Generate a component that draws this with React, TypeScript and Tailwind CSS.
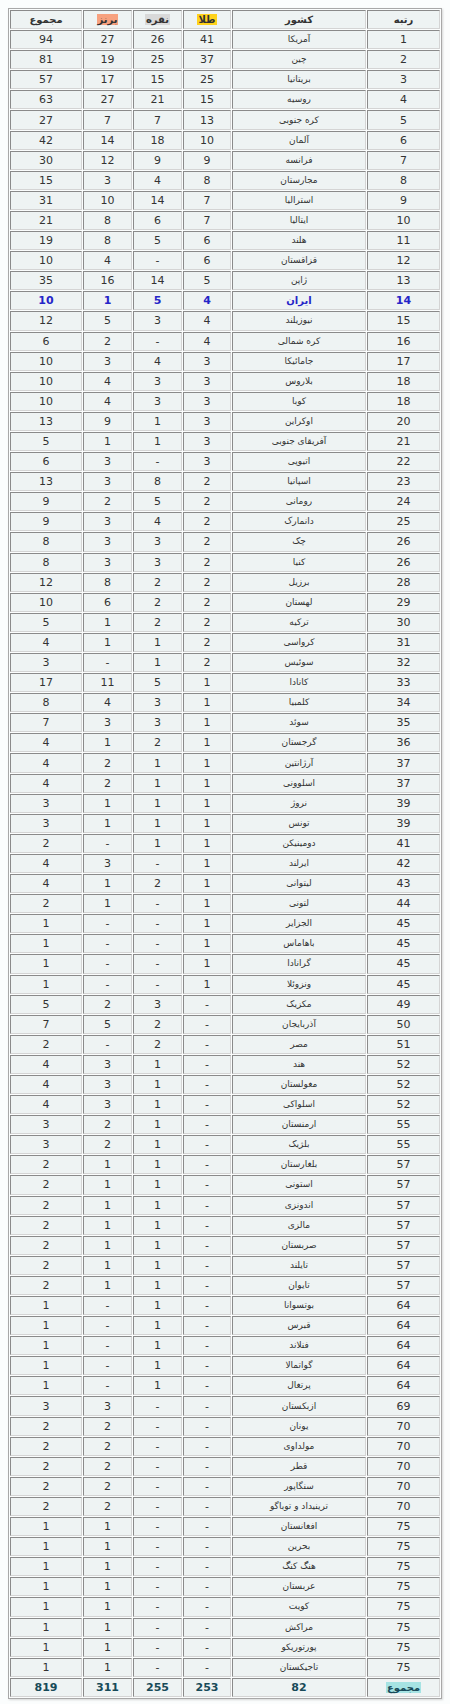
type Row = [string, string, string, string, string, string]

const rows: Row[] = [
  ["1", "آمریکا", "41", "26", "27", "94"],
  ["2", "چین", "37", "25", "19", "81"],
  ["3", "بریتانیا", "25", "15", "17", "57"],
  ["4", "روسیه", "15", "21", "27", "63"],
  ["5", "کره جنوبی", "13", "7", "7", "27"],
  ["6", "آلمان", "10", "18", "14", "42"],
  ["7", "فرانسه", "9", "9", "12", "30"],
  ["8", "مجارستان", "8", "4", "3", "15"],
  ["9", "استرالیا", "7", "14", "10", "31"],
  ["10", "ایتالیا", "7", "6", "8", "21"],
  ["11", "هلند", "6", "5", "8", "19"],
  ["12", "قزاقستان", "6", "-", "4", "10"],
  ["13", "ژاپن", "5", "14", "16", "35"],
  ["14", "ایران", "4", "5", "1", "10"],
  ["15", "نیوزیلند", "4", "3", "5", "12"],
  ["16", "کره شمالی", "4", "-", "2", "6"],
  ["17", "جامائیکا", "3", "4", "3", "10"],
  ["18", "بلاروس", "3", "3", "4", "10"],
  ["18", "کوبا", "3", "3", "4", "10"],
  ["20", "اوکراین", "3", "1", "9", "13"],
  ["21", "آفریقای جنوبی", "3", "1", "1", "5"],
  ["22", "اتیوپی", "3", "-", "3", "6"],
  ["23", "اسپانیا", "2", "8", "3", "13"],
  ["24", "رومانی", "2", "5", "2", "9"],
  ["25", "دانمارک", "2", "4", "3", "9"],
  ["26", "چک", "2", "3", "3", "8"],
  ["26", "کنیا", "2", "3", "3", "8"],
  ["28", "برزیل", "2", "2", "8", "12"],
  ["29", "لهستان", "2", "2", "6", "10"],
  ["30", "ترکیه", "2", "2", "1", "5"],
  ["31", "کرواسی", "2", "1", "1", "4"],
  ["32", "سوئیس", "2", "1", "-", "3"],
  ["33", "کانادا", "1", "5", "11", "17"],
  ["34", "کلمبیا", "1", "3", "4", "8"],
  ["35", "سوئد", "1", "3", "3", "7"],
  ["36", "گرجستان", "1", "2", "1", "4"],
  ["37", "آرژانتین", "1", "1", "2", "4"],
  ["37", "اسلوونی", "1", "1", "2", "4"],
  ["39", "نروژ", "1", "1", "1", "3"],
  ["39", "تونس", "1", "1", "1", "3"],
  ["41", "دومینیکن", "1", "1", "-", "2"],
  ["42", "ایرلند", "1", "-", "3", "4"],
  ["43", "لیتوانی", "1", "2", "1", "4"],
  ["44", "لتونی", "1", "-", "1", "2"],
  ["45", "الجزایر", "1", "-", "-", "1"],
  ["45", "باهاماس", "1", "-", "-", "1"],
  ["45", "گرانادا", "1", "-", "-", "1"],
  ["45", "ونزوئلا", "1", "-", "-", "1"],
  ["49", "مکزیک", "-", "3", "2", "5"],
  ["50", "آذربایجان", "-", "2", "5", "7"],
  ["51", "مصر", "-", "2", "-", "2"],
  ["52", "هند", "-", "1", "3", "4"],
  ["52", "مغولستان", "-", "1", "3", "4"],
  ["52", "اسلواکی", "-", "1", "3", "4"],
  ["55", "ارمنستان", "-", "1", "2", "3"],
  ["55", "بلژیک", "-", "1", "2", "3"],
  ["57", "بلغارستان", "-", "1", "1", "2"],
  ["57", "استونی", "-", "1", "1", "2"],
  ["57", "اندونزی", "-", "1", "1", "2"],
  ["57", "مالزی", "-", "1", "1", "2"],
  ["57", "صربستان", "-", "1", "1", "2"],
  ["57", "تایلند", "-", "1", "1", "2"],
  ["57", "تایوان", "-", "1", "1", "2"],
  ["64", "بوتسوانا", "-", "1", "-", "1"],
  ["64", "قبرس", "-", "1", "-", "1"],
  ["64", "فنلاند", "-", "1", "-", "1"],
  ["64", "گواتمالا", "-", "1", "-", "1"],
  ["64", "پرتغال", "-", "1", "-", "1"],
  ["69", "ازبکستان", "-", "-", "3", "3"],
  ["70", "یونان", "-", "-", "2", "2"],
  ["70", "مولداوی", "-", "-", "2", "2"],
  ["70", "قطر", "-", "-", "2", "2"],
  ["70", "سنگاپور", "-", "-", "2", "2"],
  ["70", "ترینیداد و توباگو", "-", "-", "2", "2"],
  ["75", "افغانستان", "-", "-", "1", "1"],
  ["75", "بحرین", "-", "-", "1", "1"],
  ["75", "هنگ کنگ", "-", "-", "1", "1"],
  ["75", "عربستان", "-", "-", "1", "1"],
  ["75", "کویت", "-", "-", "1", "1"],
  ["75", "مراکش", "-", "-", "1", "1"],
  ["75", "پورتوریکو", "-", "-", "1", "1"],
  ["75", "تاجیکستان", "-", "-", "1", "1"],
]

const cell =
  "h-[19.1px] p-0 text-center align-middle bg-[#eef3f3] border border-t-[#8a8a8a] border-l-[#8a8a8a] border-b-[#d4d4d4] border-r-[#d4d4d4] leading-none"

export default function App() {
  return (
    <div className="min-h-screen bg-[#fbfdfd] pt-[8px] px-[8px] font-['DejaVu_Sans',sans-serif]">
      <table
        dir="rtl"
        className="w-[434px] table-fixed border-separate border-spacing-[1px] border border-[#a8a8a8] bg-[#fbfdfd] shadow-[1px_1px_2px_rgba(0,0,0,0.15)]"
      >
        <thead>
          <tr className="text-[10px] font-bold text-[#333]">
            <th className={`${cell} w-[73px]`}>رتبه</th>
            <th className={`${cell} w-[134px]`}>کشور</th>
            <th className={`${cell} w-[48px]`}>
              <span className="bg-[#ffd21a] px-[1px]">طلا</span>
            </th>
            <th className={`${cell} w-[49px]`}>
              <span className="bg-[#d9d9d9] px-[1px]">نقره</span>
            </th>
            <th className={`${cell} w-[49px]`}>
              <span className="bg-[#f7a17f] px-[1px]">برنز</span>
            </th>
            <th className={`${cell} w-[72px]`}>مجموع</th>
          </tr>
        </thead>
        <tbody>
          {rows.map((r, i) => {
            const iran = r[1] === "ایران"
            const tone = iran ? "text-[#2525c8] font-bold" : "text-[#333]"
            return (
              <tr key={i} className={tone}>
                <td className={`${cell} text-[11px]`}>{r[0]}</td>
                <td className={`${cell} ${iran ? "text-[10px]" : "text-[9px]"}`}>{r[1]}</td>
                <td className={`${cell} text-[11px]`}>{r[2]}</td>
                <td className={`${cell} text-[11px]`}>{r[3]}</td>
                <td className={`${cell} text-[11px]`}>{r[4]}</td>
                <td className={`${cell} text-[11px]`}>{r[5]}</td>
              </tr>
            )
          })}
          <tr className="font-bold text-[#174a58] text-[11px]">
            <td className={cell}>
              <span className="bg-[#a6e3e3] px-[1px] text-[10px]">مجموع</span>
            </td>
            <td className={cell}>82</td>
            <td className={cell}>253</td>
            <td className={cell}>255</td>
            <td className={cell}>311</td>
            <td className={cell}>819</td>
          </tr>
        </tbody>
      </table>
    </div>
  )
}
